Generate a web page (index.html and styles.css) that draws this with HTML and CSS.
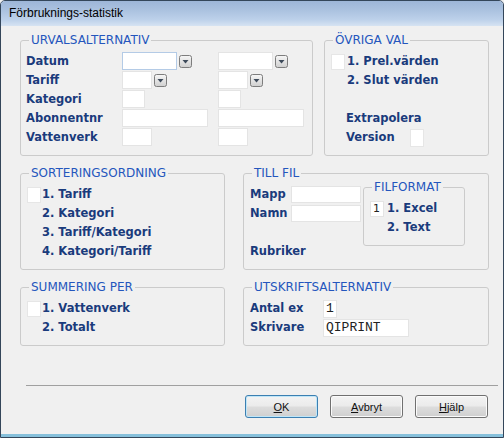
FILE: index.html
```html
<!DOCTYPE html>
<html lang="sv">
<head>
<meta charset="utf-8">
<title>Förbruknings-statistik</title>
<link rel="stylesheet" href="styles.css">
</head>
<body>
<div class="window">
  <div class="titlebar">Förbruknings-statistik</div>
  <div class="client">
    <div class="grouprow row-top">
      <fieldset class="group g-urval">
        <legend>URVALSALTERNATIV</legend>
        <div class="urval-grid">
          <span class="lbl">Datum</span>
          <span class="cell"><input class="inp w55 focus" type="text"><span class="dd"><svg width="13" height="13" viewBox="0 0 13 13"><defs><linearGradient id="g1" x1="0" y1="0" x2="0" y2="1"><stop offset="0" stop-color="#f7f7f7"/><stop offset="1" stop-color="#cfcfcf"/></linearGradient></defs><rect x="0.5" y="0.5" width="12" height="12" rx="2" fill="url(#g1)" stroke="#7d7d7d"/><path d="M3.5 5h6l-3 3.5z" fill="#3d4a5a"/></svg></span></span>
          <span class="cell"><input class="inp w55" type="text"><span class="dd"><svg width="13" height="13" viewBox="0 0 13 13"><rect x="0.5" y="0.5" width="12" height="12" rx="2" fill="url(#g1)" stroke="#7d7d7d"/><path d="M3.5 5h6l-3 3.5z" fill="#3d4a5a"/></svg></span></span>

          <span class="lbl">Tariff</span>
          <span class="cell"><input class="inp w30" type="text"><span class="dd"><svg width="13" height="13" viewBox="0 0 13 13"><rect x="0.5" y="0.5" width="12" height="12" rx="2" fill="url(#g1)" stroke="#7d7d7d"/><path d="M3.5 5h6l-3 3.5z" fill="#3d4a5a"/></svg></span></span>
          <span class="cell"><input class="inp w30" type="text"><span class="dd"><svg width="13" height="13" viewBox="0 0 13 13"><rect x="0.5" y="0.5" width="12" height="12" rx="2" fill="url(#g1)" stroke="#7d7d7d"/><path d="M3.5 5h6l-3 3.5z" fill="#3d4a5a"/></svg></span></span>

          <span class="lbl">Kategori</span>
          <span class="cell"><input class="inp w23" type="text"></span>
          <span class="cell"><input class="inp w23" type="text"></span>

          <span class="lbl">Abonnentnr</span>
          <span class="cell"><input class="inp w86" type="text"></span>
          <span class="cell"><input class="inp w86" type="text"></span>

          <span class="lbl">Vattenverk</span>
          <span class="cell"><input class="inp w30" type="text"></span>
          <span class="cell"><input class="inp w30" type="text"></span>
        </div>
      </fieldset>

      <fieldset class="group g-ovriga">
        <legend>ÖVRIGA VAL</legend>
        <div class="lines">
          <div class="line"><span class="chk"></span><span class="lbl">1. Prel.värden</span></div>
          <div class="line indent-o"><span class="lbl">2. Slut värden</span></div>
          <div class="line"></div>
          <div class="line indent"><span class="lbl">Extrapolera</span></div>
          <div class="line indent"><span class="lbl w64">Version</span><span class="chk tall"></span></div>
        </div>
      </fieldset>
    </div>

    <div class="grouprow row-mid">
      <fieldset class="group g-left g-sort">
        <legend>SORTERINGSORDNING</legend>
        <div class="lines">
          <div class="line"><span class="chk"></span><span class="lbl">1. Tariff</span></div>
          <div class="line indent"><span class="lbl">2. Kategori</span></div>
          <div class="line indent"><span class="lbl">3. Tariff/Kategori</span></div>
          <div class="line indent"><span class="lbl">4. Kategori/Tariff</span></div>
        </div>
      </fieldset>

      <fieldset class="group g-right g-fil">
        <legend>TILL FIL</legend>
        <div class="fil-body">
          <div class="lines fil-left">
            <div class="line"><span class="lbl w41">Mapp</span><input class="inp w70 h17" type="text"></div>
            <div class="line"><span class="lbl w41">Namn</span><input class="inp w70 h17" type="text"></div>
            <div class="line"></div>
            <div class="line"><span class="lbl">Rubriker</span></div>
          </div>
          <fieldset class="group g-format">
            <legend>FILFORMAT</legend>
            <div class="lines">
              <div class="line"><input class="inp w14 h16 sans" type="text" value="1"><span class="lbl">1. Excel</span></div>
              <div class="line indent-f"><span class="lbl">2. Text</span></div>
            </div>
          </fieldset>
        </div>
      </fieldset>
    </div>

    <div class="grouprow row-bot">
      <fieldset class="group g-left g-summ">
        <legend>SUMMERING PER</legend>
        <div class="lines">
          <div class="line"><span class="chk"></span><span class="lbl">1. Vattenverk</span></div>
          <div class="line indent"><span class="lbl">2. Totalt</span></div>
        </div>
      </fieldset>

      <fieldset class="group g-right g-utskrift">
        <legend>UTSKRIFTSALTERNATIV</legend>
        <div class="lines">
          <div class="line"><span class="lbl w73">Antal ex</span><input class="inp w14 mono" type="text" value="1"></div>
          <div class="line"><span class="lbl w73">Skrivare</span><input class="inp w86 mono" type="text" value="QIPRINT"></div>
        </div>
      </fieldset>
    </div>

    <div class="footer">
      <button class="btn default" type="button"><u>O</u>K</button>
      <button class="btn" type="button"><u>A</u>vbryt</button>
      <button class="btn" type="button"><u>H</u>jälp</button>
    </div>
  </div>
</div>
</body>
</html>
```

FILE: styles.css
```css
html, body {
  margin: 0;
  padding: 0;
  background: #f0f0f0;
}

.window {
  box-sizing: border-box;
  width: 504px;
  height: 438px;
  border: 1px solid #34465a;
  border-radius: 5px 5px 0 0;
  display: flex;
  flex-direction: column;
  background: #f0f0f0;
  overflow: hidden;
}

.titlebar {
  height: 25px;
  flex: none;
  box-sizing: border-box;
  padding-left: 8px;
  font: 12px/25px "Liberation Sans", Arial, sans-serif;
  color: #000;
  background: linear-gradient(to bottom, #9db6d8 0%, #aac1df 35%, #bdd1ea 75%, #d6e3f2 100%);
}

.client {
  flex: 1;
  display: flex;
  flex-direction: column;
  padding: 8px 0 0 19px;
  border-bottom: 3px solid #86c0db;
  min-height: 0;
}

.grouprow {
  display: flex;
  align-items: flex-start;
}
.row-top { gap: 11px; }
.row-mid { gap: 18px; margin-top: 11px; }
.row-bot { gap: 18px; margin-top: 11px; }

.group {
  box-sizing: border-box;
  margin: 0;
  padding: 0;
  min-width: 0;
  border: 1px solid #cbcbcb;
  border-radius: 3px;
}
.group legend {
  margin-left: 8px;
  padding: 0 2px;
  font: 12px/13px "DejaVu Sans", Verdana, sans-serif;
  color: #2456bd;
}

.g-urval { width: 293px; height: 122px; }
.g-ovriga { width: 165px; height: 122px; }
.g-left { width: 205px; }
.g-right { width: 246px; }
.g-sort, .g-fil { height: 103px; }
.g-summ, .g-utskrift { height: 65px; }
.g-format { width: 102px; height: 65px; margin: 1px 0 0 2px; }

.lbl {
  font: bold 11.5px/19px "DejaVu Sans", Verdana, sans-serif;
  color: #1a3b7c;
  white-space: nowrap;
}

.urval-grid {
  display: grid;
  grid-template-columns: 96px 96px 1fr;
  grid-auto-rows: 19px;
  padding: 5px 0 0 5px;
}

.cell {
  display: flex;
  align-items: center;
  gap: 2px;
  height: 18px;
}

.inp {
  box-sizing: border-box;
  height: 18px;
  margin: 0;
  padding: 0 1px;
  border: 1px solid #e4e4e4;
  background: #fff;
  outline: none;
  color: #222;
  font: 11px "DejaVu Sans", Verdana, sans-serif;
}
.inp.focus { border-color: #b4cbe6; }
.inp.h17 { height: 17px; }
.inp.h16 { height: 16px; }
.inp.mono { font: 13px "Liberation Mono", "Courier New", monospace; padding-left: 2px; }
.inp.sans { font: 11px "DejaVu Sans", Verdana, sans-serif; padding: 0 0 0 2px; }

.w14 { width: 14px; }
.w23 { width: 23px; }
.w30 { width: 30px; }
.w55 { width: 55px; }
.w70 { width: 70px; }
.w86 { width: 86px; }

.dd {
  display: flex;
  width: 13px;
  height: 13px;
}

.lines {
  display: flex;
  flex-direction: column;
  padding: 5px 0 0 6px;
}
.line {
  display: flex;
  align-items: center;
  height: 19px;
}

.chk {
  box-sizing: border-box;
  width: 14px;
  height: 16px;
  margin-right: 1px;
  background: #fff;
  border: 1px solid #e6e6e6;
}
.chk.tall { height: 18px; }
.g-ovriga .chk { margin-right: 2px; }

.indent { padding-left: 15px; }
.indent-o { padding-left: 16px; }
.indent-f { padding-left: 17px; }

.lbl.w64 { width: 64px; }
.lbl.w41 { width: 41px; }
.lbl.w73 { width: 73px; }

.fil-body {
  display: flex;
  align-items: flex-start;
}
.fil-left { width: 111px; }
.g-format .inp { margin-right: 3px; }

.footer {
  margin: auto 5px 0 6px;
  height: 49px;
  box-sizing: border-box;
  border-top: 1px solid #a0a0a0;
  display: flex;
  justify-content: flex-end;
  align-items: flex-start;
  gap: 12px;
  padding: 9px 10px 0 0;
}

.btn {
  box-sizing: border-box;
  width: 73px;
  height: 23px;
  margin: 0;
  padding: 0;
  border: 1px solid #707070;
  border-radius: 3px;
  background: linear-gradient(to bottom, #f3f3f3 0%, #ebebeb 48%, #dddddd 52%, #cfcfcf 100%);
  box-shadow: inset 0 0 0 1px #fbfbfb;
  font: 11px "Liberation Sans", Tahoma, sans-serif;
  color: #111;
}
.btn.default {
  border-color: #3c7fb1;
  box-shadow: inset 0 0 0 1px #bfe6f8;
}
```
